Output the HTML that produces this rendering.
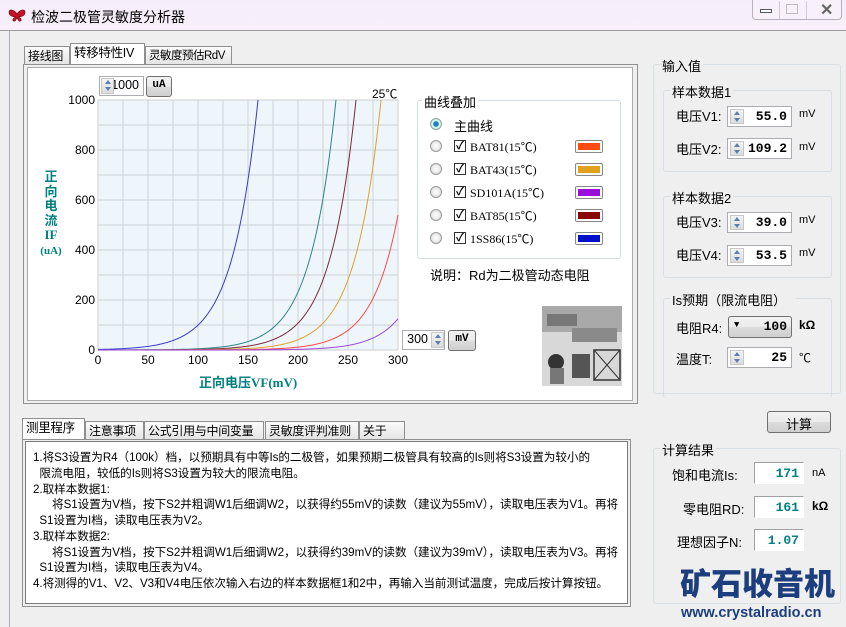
<!DOCTYPE html>
<html><head><meta charset="utf-8"><style>
*{box-sizing:border-box;margin:0;padding:0}
body{width:846px;height:627px;overflow:hidden;background:#efefef;font-family:"Liberation Sans","Noto Sans CJK SC",sans-serif;font-size:12px;color:#000;position:relative}
.a{position:absolute;white-space:nowrap}
.title{left:0;top:0;width:846px;height:31px;background:linear-gradient(#f5eefa,#f8effa);border-bottom:1px solid #a09aa6}
.tab{position:absolute;height:19px;border:1px solid #8e8f8f;border-bottom:none;background:linear-gradient(#fbfbfb,#e3e3e3);font-size:12px;padding:1px 3px;line-height:16px;white-space:nowrap;overflow:hidden;letter-spacing:-0.3px}
.tab.s{background:#fff;height:21px;z-index:2}
.panel{position:absolute;border:1px solid #8e8f8f;background:#fff}
.grp{position:absolute;border:1px solid #d5dfe5;border-radius:3px}
.grp>.lg{position:absolute;top:-9px;left:6px;background:#efefef;padding:0 2px;font-size:13px}
.spin{position:absolute;border:1px solid #abadb3;background:#fff;height:21px;font-weight:bold;font-family:"Liberation Mono","Noto Sans CJK SC",monospace;font-size:13px;text-align:right;padding:2px 4px 0 0}
.spin i{position:absolute;left:2px;top:2px;width:14px;height:15px;background:linear-gradient(#f4f4f4,#dcdcdc);border:1px solid #c7c7c7}
.spin i:before{content:"";position:absolute;left:3px;top:1px;border:3px solid transparent;border-bottom:4px solid #5a7fb0;border-top:none}
.spin i:after{content:"";position:absolute;left:3px;top:8px;border:3px solid transparent;border-top:4px solid #5a7fb0;border-bottom:none}
.btn{position:absolute;border:1px solid #707070;border-radius:3px;background:linear-gradient(#f2f2f2,#ebebeb 50%,#dddddd 50%,#cfcfcf);text-align:center}
.out{position:absolute;background:#fff;border:1px solid #a0a0a0;border-right-color:#fff;border-bottom-color:#fff;color:#008080;font-weight:bold;font-family:"Liberation Mono",monospace;font-size:13px;text-align:right;padding:3px 4px 0 0;height:22px}
.lbl{font-size:13px}
.rad{position:absolute;width:12px;height:12px;border-radius:50%;border:1px solid #9a9a9a;background:radial-gradient(#fff,#d8d8d8)}
.chk{position:absolute;width:12px;height:12px;border:1px solid #333;background:#fff;font-size:11px;line-height:10px;text-align:center;font-weight:bold}
.sw{position:absolute;width:28px;height:12px;border:1px solid #888;border-radius:2px;padding:2px}
.sw b{display:block;width:100%;height:100%}
.txt{font-size:11.6px;line-height:15.75px;letter-spacing:-0.05px}
</style></head><body>
<div class="a title"></div>
<svg class="a" style="left:8px;top:9px" width="18" height="14" viewBox="0 0 18 14"><path d="M9 5 C6 0 1 0 1 3 C1 7 5 8 8 8 C4 9 4 13 7 12 L9 9 L11 12 C14 13 14 9 10 8 C13 8 17 7 17 3 C17 0 12 0 9 5Z" fill="#c4122a" stroke="#600" stroke-width=".6"/></svg>
<div class="a" style="left:31px;top:7px;font-size:14px">检波二极管灵敏度分析器</div>
<div class="a" style="left:752px;top:0;width:90px;height:20px;border:1px solid #b8b0c0;border-top:none;border-radius:0 0 4px 4px;background:#f8f0fa"></div>
<div class="a" style="left:760px;top:9px;width:12px;height:4px;border:1px solid #556;background:#fff"></div>
<div class="a" style="left:786px;top:4px;width:12px;height:10px;border:1px solid #bbb"></div>
<div class="a" style="left:779px;top:1px;width:1px;height:18px;background:#ccc"></div>
<div class="a" style="left:806px;top:1px;width:1px;height:18px;background:#ccc"></div>
<div class="a" style="left:820px;top:0px;font-size:16px;color:#666;font-weight:bold">✕</div>
<div class="a" style="left:9px;top:31px;width:1px;height:596px;background:#b0a8b8"></div>

<!-- top tabs -->
<div class="tab" style="left:24px;top:46px;width:46px">接线图</div>
<div class="tab s" style="left:70px;top:43px;width:75px;font-size:12.5px">转移特性IV</div>
<div class="tab" style="left:145px;top:46px;width:87px;font-size:11.5px;letter-spacing:-0.5px">灵敏度预估RdV</div>
<div class="panel" style="left:23px;top:64px;width:615px;height:340px;background:#efefef"></div>
<div class="panel" style="left:27px;top:67px;width:606px;height:334px;border-color:#ababab"></div>

<div class="spin" style="left:99px;top:76px;width:45px;height:20px;font-weight:normal;font-family:'Liberation Sans';padding-top:1px;font-size:12.5px"><i style="left:1px;top:1px;height:16px;width:13px"></i>1000</div>
<div class="btn" style="left:146px;top:76px;width:26px;height:21px;font-size:11px;font-weight:bold;font-family:'Liberation Mono';padding-top:2px">uA</div>
<div class="a" style="left:372px;top:85px;font-size:12px">25℃</div>

<svg class="a" style="left:0;top:0" width="420" height="400">
<rect x="98" y="100" width="300" height="250" fill="#eef6fc"/>
<g id="grid" stroke="#d4d8db" stroke-width="1.2"></g>
<g id="curves" fill="none" stroke-width="1"></g>
<g font-size="12" font-family="Liberation Sans" text-anchor="end">
<text x="95" y="104">1000</text><text x="95" y="154">800</text><text x="95" y="204">600</text><text x="95" y="254">400</text><text x="95" y="304">200</text><text x="95" y="354">0</text></g>
<g font-size="12" font-family="Liberation Sans" text-anchor="middle">
<text x="98" y="364">0</text><text x="148" y="364">50</text><text x="198" y="364">100</text><text x="248" y="364">150</text><text x="298" y="364">200</text><text x="348" y="364">250</text><text x="398" y="364">300</text></g>
</svg>
<div class="a" style="left:40px;top:170px;color:#008080;font-weight:bold;font-size:13px;line-height:14.5px;text-align:center;width:22px;font-family:'Liberation Serif','Noto Sans CJK SC',serif">正<br>向<br>电<br>流<br>IF<br><span style="font-size:11px">(uA)</span></div>
<div class="a" style="left:199px;top:372px;color:#008080;font-weight:bold;font-size:13px;font-family:'Liberation Serif','Noto Sans CJK SC',serif">正向电压VF(mV)</div>

<div class="spin" style="left:402px;top:330px;width:43px;height:20px;font-weight:normal;font-family:'Liberation Sans';padding:1px 16px 0 0;font-size:12.5px">300<i style="left:28px;top:1px;width:13px;height:16px"></i></div>
<div class="btn" style="left:448px;top:330px;width:28px;height:21px;font-size:11px;font-weight:bold;font-family:'Liberation Mono';padding-top:2px">mV</div>

<div class="grp" style="left:417px;top:100px;width:204px;height:159px;background:#fff"><span class="lg" style="background:#fff;left:4px">曲线叠加</span></div>
<div class="rad" style="left:430px;top:118px;background:radial-gradient(#2a7ec0 35%,#cfe 45%,#ddd)"></div>
<div class="a lbl" style="left:454px;top:116px">主曲线</div>
<div id="leg"></div>
<div class="a lbl" style="left:430px;top:265px">说明：Rd为二极管动态电阻</div>
<svg class="a" style="left:542px;top:306px" width="80" height="80">
<rect width="80" height="80" fill="#d8d8d8"/><rect y="0" width="80" height="26" fill="#a9a9a9"/>
<rect x="5" y="8" width="30" height="12" fill="#777"/><rect x="30" y="22" width="45" height="14" fill="#8a8a8a"/>
<rect x="52" y="44" width="26" height="30" fill="none" stroke="#333" stroke-width="1.5"/><path d="M52 44L78 74M78 44L52 74" stroke="#333"/>
<rect x="30" y="48" width="18" height="24" fill="#555"/><circle cx="14" cy="56" r="8" fill="#333"/><rect x="8" y="62" width="14" height="16" fill="#777"/>
</svg>

<!-- right -->
<div class="grp" style="left:653px;top:64px;width:188px;height:330px"><span class="lg">输入值</span></div>
<div class="grp" style="left:663px;top:90px;width:169px;height:82px"><span class="lg">样本数据1</span></div>
<div class="grp" style="left:663px;top:196px;width:169px;height:82px"><span class="lg">样本数据2</span></div>
<div class="grp" style="left:663px;top:298px;width:169px;height:100px;border-bottom:none"><span class="lg" style="padding-right:10px">Is预期（限流电阻）</span></div>
<div class="a lbl" style="left:676px;top:106px">电压V1:</div><div class="spin" style="left:727px;top:106px;width:65px"><i></i>55.0</div><div class="a" style="left:799px;top:108px;font-size:11px">mV</div>
<div class="a lbl" style="left:676px;top:139px">电压V2:</div><div class="spin" style="left:727px;top:138px;width:65px"><i></i>109.2</div><div class="a" style="left:799px;top:141px;font-size:11px">mV</div>
<div class="a lbl" style="left:676px;top:212px">电压V3:</div><div class="spin" style="left:727px;top:212px;width:65px"><i></i>39.0</div><div class="a" style="left:799px;top:214px;font-size:11px">mV</div>
<div class="a lbl" style="left:676px;top:245px">电压V4:</div><div class="spin" style="left:727px;top:245px;width:65px"><i></i>53.5</div><div class="a" style="left:799px;top:247px;font-size:11px">mV</div>
<div class="a lbl" style="left:676px;top:318px">电阻R4:</div>
<div class="btn" style="left:728px;top:316px;width:64px;height:22px;font-weight:bold;font-family:'Liberation Mono';font-size:13px;text-align:right;padding:2px 4px 0 0">100<span style="position:absolute;left:5px;top:3px;font-size:9px">▼</span></div>
<div class="a" style="left:799px;top:318px;font-size:12px;font-weight:bold">kΩ</div>
<div class="a lbl" style="left:676px;top:349px">温度T:</div><div class="spin" style="left:727px;top:347px;width:65px"><i></i>25</div><div class="a" style="left:799px;top:349px">℃</div>

<div class="btn" style="left:767px;top:411px;width:64px;height:22px;font-size:13px;padding-top:2px">计算</div>
<div class="grp" style="left:653px;top:448px;width:188px;height:156px"><span class="lg">计算结果</span></div>
<div class="a lbl" style="left:672px;top:465px">饱和电流Is:</div><div class="out" style="left:754px;top:462px;width:50px">171</div><div class="a" style="left:812px;top:467px;font-size:11px">nA</div>
<div class="a lbl" style="left:683px;top:499px">零电阻RD:</div><div class="out" style="left:754px;top:496px;width:50px">161</div><div class="a" style="left:812px;top:499px;font-size:12px;font-weight:bold">kΩ</div>
<div class="a lbl" style="left:677px;top:532px">理想因子N:</div><div class="out" style="left:754px;top:529px;width:50px">1.07</div>
<div class="a" style="left:680px;top:563px;font-size:31px;font-weight:900;color:#1c3e7e;font-family:'Noto Sans CJK SC',sans-serif;line-height:38px">矿石收音机</div>
<div class="a" style="left:681px;top:605px;font-size:14.5px;font-weight:bold;color:#1c3e7e">www.crystalradio.cn</div>

<!-- bottom tabs -->
<div class="tab s" style="left:22px;top:418px;width:63px;font-size:12.5px">测里程序</div>
<div class="tab" style="left:85px;top:421px;width:59px">注意事项</div>
<div class="tab" style="left:144px;top:421px;width:120px">公式引用与中间变量</div>
<div class="tab" style="left:265px;top:421px;width:94px">灵敏度评判准则</div>
<div class="tab" style="left:359px;top:421px;width:46px">关于</div>
<div class="panel" style="left:22px;top:439px;width:609px;height:168px;background:#efefef"></div>
<div class="panel" style="left:25px;top:441px;width:603px;height:163px;border-color:#7a7a7a"></div>
<div class="a txt" style="left:33px;top:450px">1.将S3设置为R4（100k）档，以预期具有中等Is的二极管，如果预期二极管具有较高的Is则将S3设置为较小的<br>&nbsp;&nbsp;限流电阻，较低的Is则将S3设置为较大的限流电阻。<br>2.取样本数据1:<br>&nbsp;&nbsp;&nbsp;&nbsp;&nbsp;&nbsp;将S1设置为V档，按下S2并粗调W1后细调W2，以获得约55mV的读数（建议为55mV），读取电压表为V1。再将<br>&nbsp;&nbsp;S1设置为I档，读取电压表为V2。<br>3.取样本数据2:<br>&nbsp;&nbsp;&nbsp;&nbsp;&nbsp;&nbsp;将S1设置为V档，按下S2并粗调W1后细调W2，以获得约39mV的读数（建议为39mV），读取电压表为V3。再将<br>&nbsp;&nbsp;S1设置为I档，读取电压表为V4。<br>4.将测得的V1、V2、V3和V4电压依次输入右边的样本数据框1和2中，再输入当前测试温度，完成后按计算按钮。</div>

<script>
var g=document.getElementById('grid'),s='';
for(var i=0;i<=12;i++){var x=98+i*25;s+='<line x1="'+x+'" y1="100" x2="'+x+'" y2="350"/>';}
for(var j=0;j<=10;j++){var y=100+j*25;s+='<line x1="98" y1="'+y+'" x2="398" y2="'+y+'"/>';}
g.innerHTML=s;
var cs=[[0,'#3a3acc'],[78,'#2e8585'],[98,'#7a2838'],[123,'#e0a030'],[156,'#ff4848'],[194,'#9a48d8']],h='';
cs.forEach(function(c){var d='';for(var v=0;v<=300;v+=1){var I=1000*Math.exp((v-160-c[0])/26);var y=350-I*0.25;if(y<100){d+='L'+(98+160+c[0])+' 100';break;}d+=(d?'L':'M')+(98+v)+' '+y.toFixed(1);}h+='<path d="'+d+'" stroke="'+c[1]+'"/>';});
document.getElementById('curves').innerHTML=h;
var L=[['BAT81','#ff4a10'],['BAT43','#e0a020'],['SD101A','#9a10d8'],['BAT85','#880808'],['1SS86','#0010c8']],o='';
L.forEach(function(l,k){var y=140+k*23;o+='<div class="rad" style="left:430px;top:'+y+'px"></div><div class="chk" style="left:454px;top:'+y+'px">✓</div><div class="a" style="left:470px;top:'+(y-2)+'px;font-family:\'Liberation Serif\',\'Noto Sans CJK SC\',serif;font-size:12px">'+l[0]+'(15℃)</div><div class="sw" style="left:575px;top:'+y+'px;height:13px"><b style="background:'+l[1]+'"></b></div>';});
document.getElementById('leg').innerHTML=o;
</script>
</body></html>
